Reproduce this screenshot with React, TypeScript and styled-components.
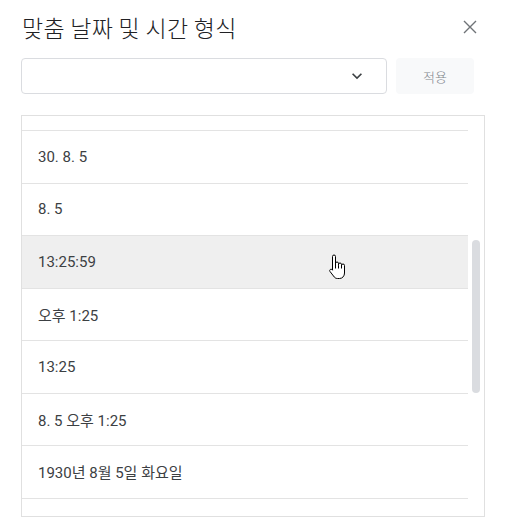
import React from "react";
import styled, { createGlobalStyle } from "styled-components";

const Global = createGlobalStyle`
  html, body { margin: 0; padding: 0; background: #fff; }
  body { font-family: Roboto, "Noto Sans CJK KR", sans-serif; }
`;

const Dialog = styled.div`
  width: 510px;
  height: 524px;
  box-sizing: border-box;
  padding: 0 25px 0 21px;
  display: flex;
  flex-direction: column;
  position: relative;
`;

const Header = styled.div`
  display: flex;
  align-items: center;
  justify-content: space-between;
  height: 54px;
  padding-left: 1px;
`;

const Title = styled.h1`
  margin: 0;
  font-family: "Noto Sans CJK KR", sans-serif;
  font-size: 23px;
  font-weight: 300;
  letter-spacing: 0.3px;
  color: #202124;
  line-height: 28px;
`;

const CloseButton = styled.button`
  border: none;
  background: none;
  padding: 0;
  width: 24px;
  height: 24px;
  display: flex;
  align-items: center;
  justify-content: center;
  color: #6f7377;
  margin-right: 3px;
`;

const Controls = styled.div`
  display: flex;
  gap: 9px;
  margin-top: 4px;
  height: 36px;
`;

const Select = styled.div`
  flex: 0 0 366px;
  box-sizing: border-box;
  border: 1px solid #dadce0;
  border-radius: 4px;
  display: flex;
  align-items: center;
  justify-content: flex-end;
  padding-right: 19px;
  color: #3c4043;
`;

const ApplyButton = styled.button`
  width: 78px;
  border: none;
  border-radius: 4px;
  background: #f8f9fa;
  color: #80868b;
  font-family: "Noto Sans CJK KR", sans-serif;
  font-weight: 300;
  font-size: 13px;
  padding: 0;
`;

const ListBox = styled.div`
  margin-top: 21px;
  width: 464px;
  height: 402px;
  box-sizing: border-box;
  border: 1px solid #e0e0e0;
  display: flex;
  overflow: hidden;
`;

const Viewport = styled.div`
  flex: 1;
  display: flex;
  flex-direction: column;
  overflow: hidden;
`;

const ScrollTrack = styled.div`
  flex: 0 0 16px;
  position: relative;
`;

const Thumb = styled.div`
  position: absolute;
  left: 4px;
  width: 8px;
  border-radius: 4px;
  background: #dadce0;
`;

const Row = styled.div<{ $hover?: boolean; $h?: number }>`
  flex: 0 0 ${(p) => p.$h ?? 52.5}px;
  box-sizing: border-box;
  border-bottom: 1px solid #e3e3e3;
  display: flex;
  align-items: center;
  padding-left: 16px;
  font-family: Roboto, "Noto Sans CJK KR", sans-serif;
  font-size: 15px;
  color: #3c4043;
  background: ${(p) => (p.$hover ? "#efefef" : "#fff")};
`;

const Cursor = styled.svg`
  position: absolute;
  left: 329px;
  top: 254px;
  pointer-events: none;
`;

const visible = [
  "30. 8. 5",
  "8. 5",
  "13:25:59",
  "오후 1:25",
  "13:25",
  "8. 5 오후 1:25",
  "1930년 8월 5일 화요일",
];

const TOTAL_ROWS = 19;
const ROW_H = 52.5;
const VIEW_H = 400;
const SCROLL_TOP = 300;

export default function App() {
  const contentH = TOTAL_ROWS * ROW_H;
  const thumbFull = (VIEW_H * VIEW_H) / contentH;
  const thumbTop = (SCROLL_TOP * (VIEW_H - thumbFull)) / (contentH - VIEW_H) + 4;
  const thumbH = thumbFull - 8;
  return (
    <>
      <Global />
      <Dialog>
        <Header>
          <Title>맞춤 날짜 및 시간 형식</Title>
          <CloseButton aria-label="닫기">
            <svg width="14" height="14" viewBox="0 0 14 14">
              <path d="M1 1 L13 13 M13 1 L1 13" stroke="currentColor" strokeWidth="1.4" />
            </svg>
          </CloseButton>
        </Header>
        <Controls>
          <Select>
            <svg width="20" height="20" viewBox="0 0 24 24" fill="currentColor">
              <path d="M16.59 8.59L12 13.17 7.41 8.59 6 10l6 6 6-6z" />
            </svg>
          </Select>
          <ApplyButton>적용</ApplyButton>
        </Controls>
        <ListBox>
          <Viewport>
            <Row $h={15} />
            {visible.map((r, i) => (
              <Row key={i} $hover={i === 2}>
                {r}
              </Row>
            ))}
            <Row $h={60} />
          </Viewport>
          <ScrollTrack>
            <Thumb style={{ top: thumbTop, height: thumbH }} />
          </ScrollTrack>
        </ListBox>
        <Cursor width="19" height="27" viewBox="0 0 19 27">
          <path
            d="M3.5 14 V2.5 a1.5 1.5 0 0 1 3 0 V11 V9.5 a1.5 1.5 0 0 1 3 0 V11.5 V10.5 a1.5 1.5 0 0 1 3 0 V12 V11.5 a1.5 1.5 0 0 1 3 0 V19 c0 3 -2 5.5 -5 5.5 H8.5 c-2 0 -3 -1 -4 -2.5 L1 17.5 c-0.6 -0.9 -0.3 -1.8 0.5 -2.1 c0.7 -0.3 1.4 0 2 0.8 Z"
            fill="#fff"
            stroke="#000"
            strokeWidth="1"
            strokeLinejoin="round"
          />
          <path d="M6.5 11 V14.5 M9.5 11.5 V14.5 M12.5 12 V14.5" stroke="#000" strokeWidth="1" />
        </Cursor>
      </Dialog>
    </>
  );
}
